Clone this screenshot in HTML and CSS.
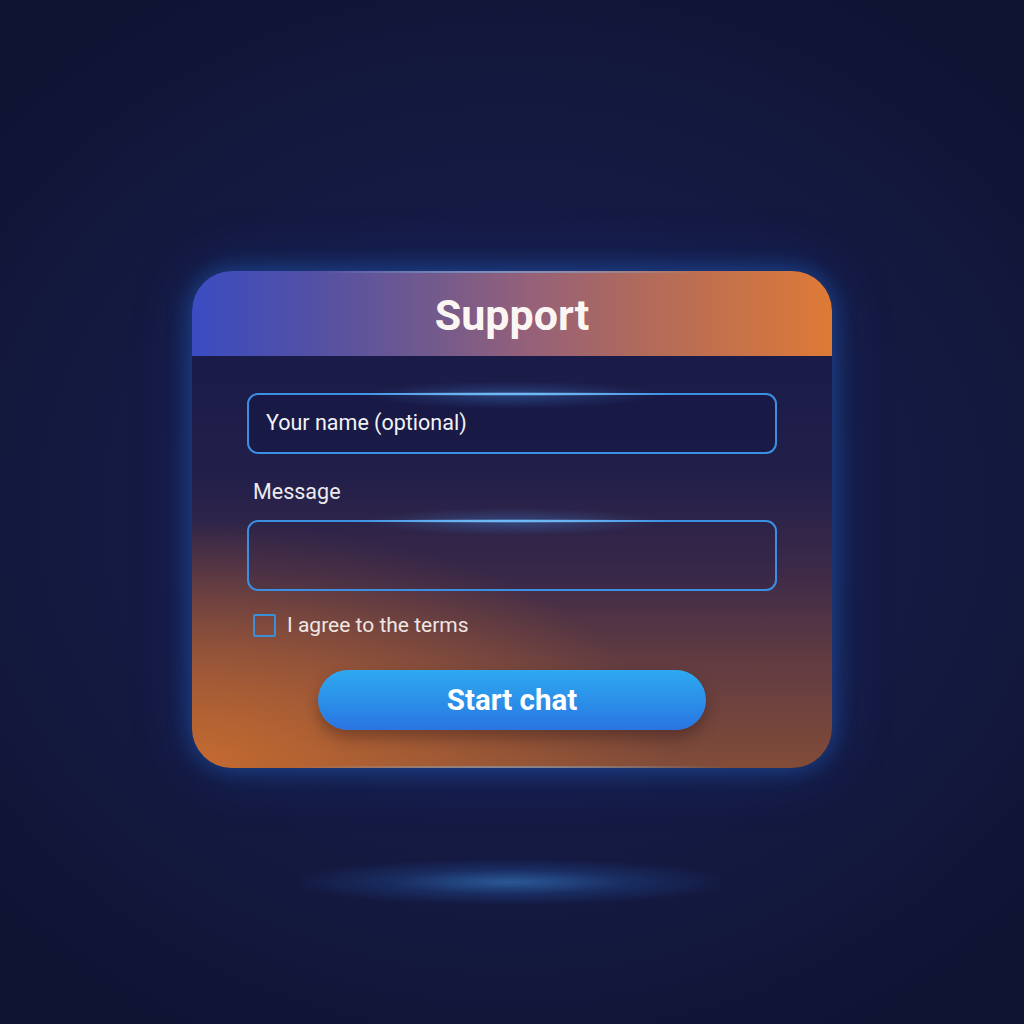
FILE: index.html
```html
<!DOCTYPE html>
<html>
<head>
<meta charset="utf-8">
<link rel="stylesheet" href="styles.css">
</head>
<body>
<div class="stage">
  <div class="card">
    <div class="card-header">
      <h1 class="title">Support</h1>
    </div>
    <div class="card-body">
      <div class="field field-name"><span class="placeholder">Your name (optional)</span></div>
      <div class="label">Message</div>
      <div class="field field-message"></div>
      <div class="check-row">
        <span class="checkbox"></span>
        <span class="check-label">I agree to the terms</span>
      </div>
      <div class="btn-row">
        <div class="btn">Start chat</div>
      </div>
    </div>
  </div>
  <div class="floor-glow"></div>
</div>
</body>
</html>
```

FILE: styles.css
```css
html, body {
  margin: 0;
  padding: 0;
  width: 1024px;
  height: 1024px;
  overflow: hidden;
}
body {
  background: radial-gradient(ellipse 70% 60% at 50% 50%, #1a1f4f 0%, #161b46 45%, #0f1433 100%);
  font-family: Roboto, "Noto Sans", "Liberation Sans", sans-serif;
  color: #fff;
}
.stage {
  position: relative;
  width: 1024px;
  height: 1024px;
  display: flex;
  flex-direction: column;
  align-items: center;
  padding-top: 271px;
  box-sizing: border-box;
}
.card {
  position: relative;
  width: 640px;
  border-radius: 40px;
  overflow: hidden;
  box-shadow: 0 0 24px rgba(40, 120, 230, 0.45), 0 0 60px rgba(30, 90, 200, 0.25);
}
.card::before {
  content: "";
  position: absolute;
  left: 15%;
  right: 15%;
  top: 0;
  height: 2px;
  background: radial-gradient(ellipse at center, rgba(120, 200, 255, 0.9), rgba(120, 200, 255, 0) 70%);
  z-index: 2;
}
.card::after {
  content: "";
  position: absolute;
  left: 10%;
  right: 10%;
  bottom: 0;
  height: 2px;
  background: radial-gradient(ellipse at center, rgba(120, 200, 255, 0.8), rgba(120, 200, 255, 0) 70%);
  z-index: 2;
}
.card-header {
  height: 85px;
  display: flex;
  align-items: center;
  justify-content: center;
  background: linear-gradient(90deg, #3b4cc2 0%, #5150a6 18%, #735a8c 38%, #94607a 52%, #b06a5c 70%, #de7a36 100%);
}
.title {
  margin: 0;
  font-size: 43px;
  font-weight: 700;
  color: #fbf6f4;
  letter-spacing: 0;
  padding-top: 2px;
}
.card-body {
  padding: 37px 55px 38px;
  display: flex;
  flex-direction: column;
  background:
    radial-gradient(ellipse 75% 60% at 0% 100%, rgba(200, 108, 48, 0.95) 0%, rgba(200, 108, 48, 0) 100%),
    linear-gradient(180deg, #1a1b48 0%, #221f4a 30%, #3d2a48 52%, #5e3a42 72%, #824c38 100%);
}
.field {
  position: relative;
  box-sizing: border-box;
  border: 2px solid #3b8fe3;
  border-radius: 11px;
  display: flex;
  align-items: center;
  padding-left: 17px;
}
.field::before {
  content: "";
  position: absolute;
  left: 18%;
  right: 18%;
  top: -3px;
  height: 4px;
  background: radial-gradient(ellipse at center, rgba(150, 215, 255, 1), rgba(140, 210, 255, 0) 70%);
}
.field::after {
  content: "";
  position: absolute;
  left: 22%;
  right: 22%;
  top: -14px;
  height: 28px;
  background: radial-gradient(ellipse at center, rgba(70, 150, 240, 0.3), rgba(70, 150, 240, 0) 70%);
  pointer-events: none;
}
.field-name {
  height: 61px;
  background: rgba(22, 24, 68, 0.6);
}
.field-message {
  height: 71px;
  margin-top: 16px;
  background: rgba(40, 30, 70, 0.25);
}
.placeholder {
  font-size: 21.5px;
  color: #f2f2f6;
  padding-bottom: 2px;
}
.label {
  margin-top: 26px;
  margin-left: 6px;
  font-size: 21.5px;
  line-height: 24px;
  color: #ecebf0;
}
.check-row {
  margin-top: 22px;
  margin-left: 6px;
  display: flex;
  align-items: center;
  height: 24px;
}
.checkbox {
  width: 19px;
  height: 19px;
  border: 2px solid #3b8fd8;
  border-radius: 2px;
  box-sizing: content-box;
}
.check-label {
  margin-left: 11px;
  font-size: 21px;
  color: #efe7e6;
}
.btn-row {
  margin-top: 33px;
  display: flex;
  justify-content: center;
}
.btn {
  width: 388px;
  height: 60px;
  border-radius: 30px;
  background: linear-gradient(180deg, #2ea9f0 0%, #2b8ee8 55%, #2a74e2 100%);
  box-shadow: 0 8px 14px rgba(40, 20, 20, 0.35);
  display: flex;
  align-items: center;
  justify-content: center;
  font-size: 29.5px;
  font-weight: 700;
  color: #fff;
}
.floor-glow {
  position: absolute;
  left: 300px;
  top: 860px;
  width: 420px;
  height: 44px;
  background: radial-gradient(ellipse at center, rgba(60, 140, 220, 0.55) 0%, rgba(40, 100, 190, 0.25) 40%, rgba(30, 60, 140, 0) 75%);
}
```
